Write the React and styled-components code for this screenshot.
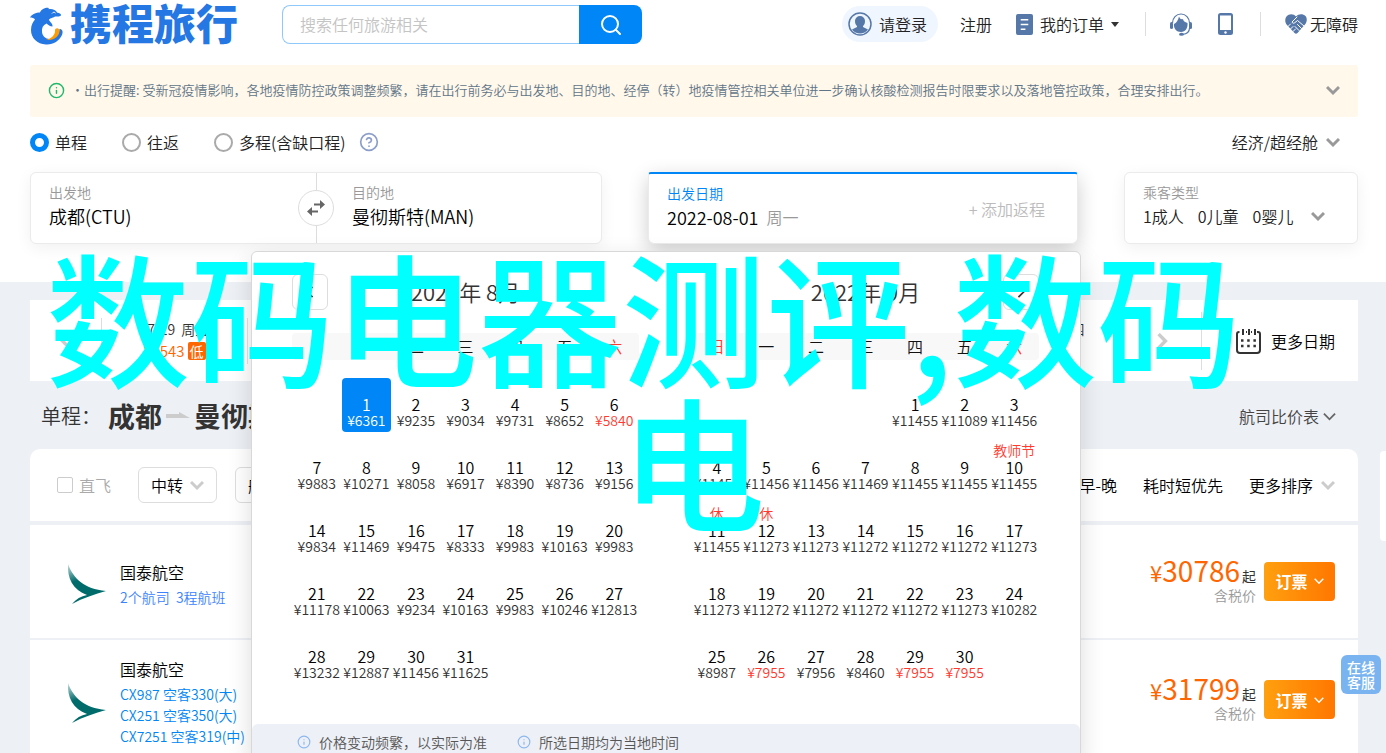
import styled, { createGlobalStyle } from "styled-components";
import { Search, Info, CircleHelp } from "lucide-react";

const GlobalStyle = createGlobalStyle`
  * {
    box-sizing: border-box;
  }

  body {
    margin: 0;
    overflow-x: hidden;
    background: #edf0f5;
    color: #000;
    font: 350 16px/24px "Noto Sans CJK SC", "Noto Sans", sans-serif;
  }

  button, input {
    font: inherit;
    color: inherit;
  }

  button {
    padding: 0;
    border: 0;
    background: none;
    cursor: pointer;
  }

  a {
    color: inherit;
    text-decoration: none;
  }
`;

const Page = styled.div`
  position: relative;
  min-height: 100vh;
  overflow: hidden;
`;

const Top = styled.div`
  padding: 0 28px 38px 30px;
  background: #fff;
`;

/* header */

const Header = styled.header`
  display: flex;
  align-items: center;
  height: 49px;
`;

const Logo = styled.a`
  display: flex;
  align-items: center;
  gap: 6px;
  width: 252px;
  padding-top: 2px;
  color: #2577e3;
  font-family: "Liberation Sans", "Noto Sans CJK SC", sans-serif;
  font-size: 42px;
  font-weight: 900;
  line-height: 48px;
`;

const SearchForm = styled.form`
  display: flex;
  width: 360px;
  height: 39px;
`;

const SearchInput = styled.input`
  flex: 1;
  min-width: 0;
  padding: 0 17px 2px;
  border: 1px solid #8fc8fa;
  border-right: 0;
  border-radius: 8px 0 0 8px;
  outline: 0;

  &::placeholder {
    color: #c4c4c4;
  }
`;

const SearchButton = styled.button`
  display: flex;
  align-items: center;
  justify-content: center;
  width: 63px;
  border-radius: 0 8px 8px 0;
  background: #0086f6;
  color: #fff;
`;

const HeaderNav = styled.nav`
  display: flex;
  align-items: center;
  margin-left: auto;
  padding-bottom: 1px;
  color: #222;
`;

const Login = styled.a`
  display: flex;
  align-items: center;
  gap: 7px;
  height: 36px;
  margin-right: 22px;
  padding: 0 11px 0 6px;
  border-radius: 18px;
  background: #f0f6ff;
`;

const NavLink = styled.a`
  display: flex;
  align-items: center;
  gap: ${(p) => p.$gap || 0}px;
  margin-right: ${(p) => p.$after || 0}px;
`;

const Caret = styled.i`
  border: 4px solid transparent;
  border-top: 5px solid #333;
  border-bottom: 0;
`;

const NavDivider = styled.span`
  width: 1px;
  height: 24px;
  margin-right: 24px;
  background: #ddd;
`;

/* notice and trip type */

const Notice = styled.div`
  display: flex;
  align-items: center;
  gap: 6px;
  height: 52px;
  margin-top: 16px;
  padding: 0 18px 2px;
  border-radius: 3px;
  background: #fff8eb;
  color: #5f7588;
  font-size: 13px;
  white-space: nowrap;
`;

const NoticeText = styled.p`
  flex: 1;
  margin: 0;
`;

const TripRow = styled.div`
  display: flex;
  align-items: center;
  height: 50px;
  margin-bottom: 5px;
  color: #222;
`;

const TripOption = styled.label`
  display: flex;
  align-items: center;
  gap: 6px;
  margin-right: 35px;
`;

const Radio = styled.input`
  appearance: none;
  width: 19px;
  height: 19px;
  margin: 0;
  border: 2px solid #aaa;
  border-radius: 50%;

  &:checked {
    border: 5px solid #0086f6;
  }
`;

const HelpButton = styled.button`
  display: flex;
  margin-left: -22px;
  color: #8b9dc9;
`;

const CabinButton = styled.button`
  display: flex;
  align-items: center;
  gap: 8px;
  margin-left: auto;
  padding-right: 18px;
`;

/* search fields */

const Fields = styled.div`
  position: relative;
  display: grid;
  grid-template-columns: 572fr 430fr 234fr;
  gap: 46px;
`;

const Card = styled.div`
  display: flex;
  min-width: 0;
  height: 72px;
  border: 1px solid #ebebeb;
  border-radius: 6px;
  background: #fff;
  box-shadow: 0 4px 16px rgba(0, 0, 0, 0.06);
`;

const DateCard = styled(Card)`
  justify-content: space-between;
  padding-right: 32px;
  border-top: 2px solid #0086f6;
  border-radius: 3px 3px 6px 6px;
  box-shadow: 0 6px 20px rgba(0, 0, 0, 0.2);
`;

const Field = styled.div`
  flex: 1;
  padding: 7px 0 0 18px;
`;

const FieldLabel = styled.div`
  color: ${(p) => (p.$active ? "#0086f6" : "#999")};
  font-size: 14px;
`;

const FieldValue = styled.div`
  display: flex;
  align-items: center;
  gap: ${(p) => (p.$small ? 14 : 8)}px;
  color: ${(p) => (p.$small ? "#222" : "#000")};
  font-size: ${(p) => (p.$small ? 16 : 18)}px;

  svg {
    margin-left: 4px;
  }
`;

const Weekday = styled.span`
  color: #999;
  font-size: 16px;
`;

const AddReturn = styled.button`
  color: #bbb;
`;

const SwapColumn = styled.div`
  display: flex;
  align-items: center;
  width: 36px;
  background: linear-gradient(#ddd, #ddd) center / 1px 100% no-repeat;
`;

const SwapButton = styled.button`
  display: flex;
  align-items: center;
  justify-content: center;
  width: 36px;
  height: 36px;
  border: 1px solid #ddd;
  border-radius: 50%;
  background: #fff;
`;

/* calendar popup */

const Popup = styled.div`
  position: absolute;
  z-index: 5;
  top: 79px;
  right: 277px;
  width: 830px;
  border: 1px solid #d8d8d8;
  border-radius: 6px;
  background: #fff;
  box-shadow: 0 8px 24px rgba(0, 0, 0, 0.14);
`;

const Months = styled.div`
  display: flex;
  gap: 53px;
  padding: 22px 41px 40px 40px;
`;

const Month = styled.section`
  flex: 1;
`;

const MonthHead = styled.div`
  display: grid;
  grid-template-columns: 36px 1fr 36px;
  align-items: center;
  height: 36px;
  margin-bottom: 23px;
`;

const MonthTitle = styled.h2`
  grid-column: 2;
  margin: 0;
  padding-bottom: 2px;
  color: #333;
  font-size: 22px;
  font-weight: 350;
  text-align: center;
`;

const MonthButton = styled.button`
  display: flex;
  align-items: center;
  justify-content: center;
  grid-column: ${(p) => (p.$next ? 3 : 1)};
  grid-row: 1;
  height: 36px;
  border: 1px solid #ddd;
  border-radius: 6px;
`;

const WeekRow = styled.div`
  display: grid;
  grid-template-columns: repeat(7, 1fr);
  height: 27px;
  margin-bottom: 18px;
  border-radius: 4px;
  background: #f8f8f8;
  line-height: 26px;
  text-align: center;
`;

const WeekName = styled.span`
  color: ${(p) => (p.$weekend ? "#ff3b30" : "#111")};
`;

const Days = styled.div`
  display: grid;
  grid-template-columns: repeat(7, 1fr);
  row-gap: 9px;
`;

const Day = styled.button`
  display: flex;
  flex-direction: column;
  align-items: center;
  grid-column: ${(p) => p.$column || "auto"};
  height: 54px;
  border-radius: 4px;
  background: ${(p) => (p.$selected ? "#0086f6" : "none")};
  color: ${(p) => (p.$selected ? "#fff" : "#000")};
  line-height: 18px;
`;

const Holiday = styled.span`
  height: 17px;
  color: #ff3b30;
  font-size: 14px;
  white-space: nowrap;
`;

const DayPrice = styled.span`
  color: ${(p) => (p.$selected ? "#fff" : p.$low ? "#ff3b30" : "#333")};
  font-size: 14px;
  line-height: 14px;
`;

const PopupFooter = styled.div`
  display: flex;
  gap: 30px;
  height: 40px;
  padding: 0 45px;
  border-radius: 6px;
  background: #edf0f6;
  color: #555;
  font-size: 14px;
  line-height: 36px;
`;

const Tip = styled.span`
  display: flex;
  align-items: center;
  gap: 8px;
  height: 36px;

  svg {
    color: #8cb8ee;
  }
`;

/* results */

const Results = styled.main`
  padding: 18px 28px 0 30px;
`;

const DateStrip = styled.div`
  display: flex;
  align-items: center;
  height: 81px;
  background: #fff;
`;

const StripArrow = styled.button`
  display: flex;
  align-items: center;
  justify-content: center;
  width: ${(p) => p.$width}px;
  height: 58px;
`;

const StripDates = styled.div`
  display: flex;
  flex: 1;
  border-left: 1px solid #ddd;
`;

const StripDate = styled.button`
  flex: 1;
  height: 46px;
  padding-bottom: 4px;
  border-right: 1px solid #e2e2e2;
  color: #333;
  font-size: 14px;
  line-height: 22px;
  white-space: pre;
`;

const StripPrice = styled.span`
  display: flex;
  align-items: center;
  justify-content: center;
  gap: 3px;
  color: #ff6600;
  font-size: 15px;
`;

const LowTag = styled.b`
  padding: 0 2px;
  border-radius: 2px;
  background: #ff6600;
  color: #fff;
  font-size: 14px;
  font-weight: 400;
  line-height: 18px;
`;

const MoreDates = styled.button`
  display: flex;
  align-items: center;
  gap: 10px;
  width: 157px;
  height: 58px;
  padding-left: 34px;
  border-left: 1px solid #ddd;
`;

const RouteRow = styled.div`
  display: flex;
  align-items: center;
  height: 68px;
  padding: 2px 22px 0 11px;
`;

const RouteType = styled.span`
  width: 67px;
  color: #333;
  font-size: 20px;
`;

const RouteTitle = styled.h1`
  display: flex;
  align-items: center;
  gap: 4px;
  margin: 0;
  color: #333;
  font-size: 27px;
`;

const CompareButton = styled.button`
  display: flex;
  align-items: center;
  gap: 4px;
  margin-left: auto;
  color: #444;
`;

const FilterBar = styled.div`
  display: flex;
  align-items: center;
  gap: 18px;
  height: 72px;
  margin-bottom: 4px;
  padding: 0 23px 1px 27px;
  border-radius: 10px 10px 0 0;
  background: #fff;
`;

const DirectLabel = styled.label`
  display: flex;
  align-items: center;
  gap: 6px;
  width: 63px;
  color: #aaa;
  white-space: nowrap;
`;

const Checkbox = styled.input`
  appearance: none;
  width: 16px;
  height: 16px;
  margin: 0;
  border: 1px solid #ccc;
  border-radius: 2px;
`;

const FilterButton = styled.button`
  display: flex;
  align-items: center;
  gap: 7px;
  height: 36px;
  padding: 0 12px;
  border: 1px solid #ddd;
  border-radius: 6px;
`;

const Sorts = styled.div`
  display: flex;
  gap: 26px;
  margin-left: auto;
`;

const SortButton = styled.button`
  display: flex;
  align-items: center;
  gap: 8px;
`;

const Flight = styled.article`
  display: flex;
  align-items: center;
  min-height: 113px;
  margin-bottom: 2px;
  padding: 18px 23px 13px 37px;
  background: #fff;
`;

const Airline = styled.div`
  margin-left: 13px;
`;

const AirlineName = styled.div`
  margin-bottom: 4px;
  line-height: 22px;
`;

const Plane = styled.div`
  color: ${(p) => (p.$soft ? "#3b82ff" : "#0086f6")};
  font-size: 14px;
  line-height: 21px;
  white-space: pre;
`;

const Booking = styled.div`
  display: flex;
  align-items: center;
  gap: 8px;
  margin-left: auto;
  padding-bottom: 6px;
`;

const PriceBox = styled.div`
  padding-bottom: 3px;
  text-align: right;
`;

const Price = styled.div`
  color: #ff6600;
  font-size: 28px;
  font-weight: 400;
  line-height: 30px;

  small {
    font-size: 22px;
    line-height: 1;
  }

  span {
    margin-left: 2px;
    color: #333;
    font-size: 14px;
    line-height: 1;
  }
`;

const Tax = styled.div`
  color: #999;
  font-size: 14px;
  line-height: 20px;
`;

const BookButton = styled.button`
  display: flex;
  align-items: center;
  justify-content: center;
  gap: 6px;
  width: 71px;
  height: 39px;
  border-radius: 4px;
  background: linear-gradient(90deg, #ffa00f, #ff7700);
  color: #fff;
  font-weight: 700;
`;

/* floating parts */

const SidePanel = styled.aside`
  position: absolute;
  top: 451px;
  right: 0;
  width: 6px;
  height: 90px;
  border-radius: 4px 0 0 4px;
  background: #fff;
`;

const ServiceButton = styled.button`
  position: fixed;
  top: 655px;
  right: 5px;
  width: 40px;
  height: 39px;
  padding: 0 5px;
  border-radius: 6px;
  background: #7ab4f0;
  color: #fff;
  font-size: 14px;
  font-weight: 500;
  line-height: 15px;
`;

const Headline = styled.div`
  position: absolute;
  z-index: 10;
  top: 242px;
  left: 0;
  width: 100%;
  padding-left: 46px;
  color: #0ff;
  font-size: 144px;
  font-weight: 500;
  line-height: 144px;
  white-space: nowrap;
  pointer-events: none;
`;

const HeadlineEnd = styled.div`
  margin-left: -46px;
  text-align: center;
`;

const turns = { down: 0, left: 90, right: 270 };

function Chevron({ color = "#999", to = "down", size = 14, weight = 3 }) {
  return (
    <svg width={size} height={size} viewBox="0 0 14 14" fill="none" stroke={color} strokeWidth={weight}>
      <path d="M1 4l6 6 6-6" transform={`rotate(${turns[to]} 7 7)`} />
    </svg>
  );
}

function Dolphin() {
  return (
    <svg width="34" height="38" viewBox="0 0 34 38">
      <path
        fill="#2577e3"
        d="M0 10.500C2 7 6 5.500 10 5.500C11 2.500 15 .5 18 .7C19 .8 19 1.500 18.500 2.200C22 1.500 26 3 27 5.500C29 6 31.500 7 31 8.300C30 10 27 9.500 25 9.500C22 11.500 19.500 11 19 13C20 15 23 17 22.500 19.500C20 19.500 18 18 16.500 16.500C13 18 11.500 21 12 25C12.500 30 17 33 22 31.500C26 30 29 27.500 29.500 22C32 22 33.500 24 32 28C29 34 23 38 16 37.500C7 37 1 31 1 23C1 18 3 15 5 12.500C4 11 2 10.500 0 10.500Z"
      />
      <path fill="#ff9c00" d="M25 23.500C25 20 30 20.500 29.500 24.500C29 30 22 34.500 16 32.500C20.500 32.500 25.500 28 25 23.500Z" />
      <path d="M22 6.500c1-1.500 2.500-1.500 3.500-.5" fill="none" stroke="#fff" />
    </svg>
  );
}

function UserIcon() {
  return (
    <svg width="24" height="24" viewBox="0 0 24 24">
      <circle cx="12" cy="12" r="11" fill="#f0f6ff" stroke="#5678a8" strokeWidth="1.5" />
      <path fill="#5678a8" d="M12 4a5 5 0 0 1 5 5c0 3-1 4-2 5v1l5 2.500A10 10 0 0 1 4 17.500L9 15v-1c-1-1-2-2-2-5a5 5 0 0 1 5-5z" />
    </svg>
  );
}

function OrderIcon() {
  return (
    <svg width="17" height="21" viewBox="0 0 18 22">
      <rect width="18" height="22" rx="2" fill="#5678a8" />
      <path d="M5 6h8M5 11h8M5 16h5" stroke="#fff" strokeWidth="1.500" />
    </svg>
  );
}

function HeadsetIcon() {
  return (
    <svg width="22" height="23" viewBox="0 0 22 23">
      <path d="M2.500 10a8.500 9 0 0 1 17 0" fill="none" stroke="#5678a8" strokeWidth="1.200" />
      <path d="M9 3.500c1 3 3 3 4 2.500 0 2 2 3 4.500 4 .5 5-2 9-6.500 9S3.500 15.500 4 11c3-1.500 4-4 5-7.500z" fill="#5678a8" />
      <rect x="0" y="9" width="3" height="7" rx="1.500" fill="#5678a8" />
      <rect x="19" y="9" width="3" height="7" rx="1.500" fill="#5678a8" />
      <path d="M19.500 15c0 4-3 6-7 6.500" fill="none" stroke="#5678a8" strokeWidth="1.200" />
      <ellipse cx="11.500" cy="21.300" rx="2.500" ry="1.500" fill="#5678a8" />
    </svg>
  );
}

function PhoneIcon() {
  return (
    <svg width="15" height="22" viewBox="0 0 15 22">
      <rect width="15" height="22" rx="2.500" fill="#5678a8" />
      <rect x="2" y="2.500" width="11" height="14.500" fill="#fff" />
      <circle cx="7.500" cy="19.500" r="1.200" fill="#fff" />
    </svg>
  );
}

function HandshakeHeart() {
  return (
    <svg width="22" height="20" viewBox="0 0 22 20">
      <path d="M11 2.500C13.500-.5 18-.5 20.500 2C22.500 4.500 22 8 20 10.500L12.500 19C11.500 20 10.500 20 9.500 19L2 11C-.5 8 0 4.500 1.500 2.500C4-.5 8.500-.5 11 2.500Z" fill="#5678a8" />
      <g fill="none" stroke="#fff" strokeLinecap="round" strokeLinejoin="round">
        <path d="M12 3L7 8C7.500 9.500 9 9.500 10 8.500L12.500 6.500L19 12" />
        <path d="M12.500 10.500l4 4M10 12.500l4 4M3 12.500l2.500-2.500M5.500 15l2.500-2.500M8 17.500l2.500-2.500" />
      </g>
    </svg>
  );
}

function SwapIcon() {
  return (
    <svg width="20" height="16" viewBox="0 0 20 16" fill="#666">
      <path d="M8 3.500h6V0l5 4.500L14 9V5.500H8z" />
      <path d="M12 10.500H6V7l-5 4.500L6 16v-3.500h6z" />
    </svg>
  );
}

function CalendarIcon() {
  return (
    <svg width="25" height="26" viewBox="0 0 25 26" fill="none" stroke="#333" strokeWidth="2">
      <path d="M3.500 4H3a2 2 0 0 0-2 2v16a3 3 0 0 0 3 3h17a3 3 0 0 0 3-3V6a2 2 0 0 0-2-2h-1M10 4h1M15 4h1M7 1v6M13 1v6M19 1v6" />
      <path d="M5 12.500h15M5 18h15" strokeWidth="2.500" strokeDasharray="2.500 3.700" />
    </svg>
  );
}

function AirlineLogo({ id }) {
  return (
    <svg width="40" height="40" viewBox="0 0 40 40">
      <linearGradient id={id} x1="0" y1="0" x2="0.300" y2="1">
        <stop offset="0" stopColor="#006b6b" stopOpacity="0.200" />
        <stop offset="0.450" stopColor="#006b6b" />
      </linearGradient>
      <path fill={`url(#${id})`} d="M1 0C6 14 17 25 39 27C28 30 16 34 5 40C9 35 14 32 20 31C6 26 0 14 1 0Z" />
    </svg>
  );
}

const weekNames = ["日", "一", "二", "三", "四", "五", "六"];

const august = {
  title: "2022年 8月",
  firstColumn: 2,
  selected: 1,
  low: [6],
  holidays: {},
  prices: [
    6361, 9235, 9034, 9731, 8652, 5840,
    9883, 10271, 8058, 6917, 8390, 8736, 9156,
    9834, 11469, 9475, 8333, 9983, 10163, 9983,
    11178, 10063, 9234, 10163, 9983, 10246, 12813,
    13232, 12887, 11456, 11625,
  ],
};

const september = {
  title: "2022年 9月",
  firstColumn: 5,
  low: [26, 29, 30],
  holidays: { 10: "教师节", 11: "休", 12: "休" },
  prices: [
    11455, 11089, 11456,
    11456, 11456, 11456, 11469, 11455, 11455, 11455,
    11455, 11273, 11273, 11272, 11272, 11272, 11273,
    11273, 11272, 11272, 11272, 11272, 11273, 10282,
    8987, 7955, 7956, 8460, 7955, 7955,
  ],
};

const stripDates = [
  { date: "07-29  周五", price: 6543, low: true },
  { date: "07-30  周六", price: 7210 },
  { date: "07-31  周日", price: 6980 },
  { date: "08-01  周一", price: 6361 },
  { date: "08-02  周二", price: 9235 },
  { date: "08-03  周三", price: 9034 },
  { date: "08-04  周四", price: 9731 },
];

const flights = [
  { id: "cx1", soft: true, planes: ["2个航司  3程航班"], price: 30786 },
  { id: "cx2", planes: ["CX987 空客330(大)", "CX251 空客350(大)", "CX7251 空客319(中)"], price: 31799 },
];

function CalendarMonth({ month, next }) {
  return (
    <Month>
      <MonthHead>
        <MonthTitle>{month.title}</MonthTitle>
        <MonthButton $next={next} aria-label={next ? "下个月" : "上个月"}>
          <Chevron to={next ? "right" : "left"} color="#333" size={12} weight={2} />
        </MonthButton>
      </MonthHead>
      <WeekRow>
        {weekNames.map((name, i) => (
          <WeekName key={name} $weekend={i === 0 || i === 6}>{name}</WeekName>
        ))}
      </WeekRow>
      <Days>
        {month.prices.map((price, i) => {
          const day = i + 1;
          const selected = day === month.selected;
          return (
            <Day key={day} $column={i === 0 ? month.firstColumn : null} $selected={selected}>
              <Holiday>{month.holidays[day]}</Holiday>
              {day}
              <DayPrice $selected={selected} $low={month.low.includes(day)}>¥{price}</DayPrice>
            </Day>
          );
        })}
      </Days>
    </Month>
  );
}

function Calendar() {
  return (
    <Popup>
      <Months>
        <CalendarMonth month={august} />
        <CalendarMonth month={september} next />
      </Months>
      <PopupFooter>
        <Tip><Info size={14} strokeWidth={2} />价格变动频繁，以实际为准</Tip>
        <Tip><Info size={14} strokeWidth={2} />所选日期均为当地时间</Tip>
      </PopupFooter>
    </Popup>
  );
}

function SiteHeader() {
  return (
    <Header>
      <Logo href="#"><Dolphin />携程旅行</Logo>
      <SearchForm>
        <SearchInput aria-label="搜索" placeholder="搜索任何旅游相关" />
        <SearchButton type="button" aria-label="搜索"><Search size={24} strokeWidth={2} /></SearchButton>
      </SearchForm>
      <HeaderNav>
        <Login href="#"><UserIcon />请登录</Login>
        <NavLink href="#" $after={24}>注册</NavLink>
        <NavLink href="#" $gap={7} $after={26}><OrderIcon />我的订单<Caret /></NavLink>
        <NavDivider />
        <NavLink href="#" $after={26} aria-label="客服"><HeadsetIcon /></NavLink>
        <NavLink href="#" $after={27} aria-label="手机版"><PhoneIcon /></NavLink>
        <NavDivider />
        <NavLink href="#" $gap={3}><HandshakeHeart />无障碍</NavLink>
      </HeaderNav>
    </Header>
  );
}

function SearchFields() {
  return (
    <Fields>
      <Card>
        <Field>
          <FieldLabel>出发地</FieldLabel>
          <FieldValue>成都(CTU)</FieldValue>
        </Field>
        <SwapColumn>
          <SwapButton aria-label="交换"><SwapIcon /></SwapButton>
        </SwapColumn>
        <Field>
          <FieldLabel>目的地</FieldLabel>
          <FieldValue>曼彻斯特(MAN)</FieldValue>
        </Field>
      </Card>
      <DateCard>
        <Field>
          <FieldLabel $active>出发日期</FieldLabel>
          <FieldValue>2022-08-01 <Weekday>周一</Weekday></FieldValue>
        </Field>
        <AddReturn>+ 添加返程</AddReturn>
      </DateCard>
      <Card>
        <Field>
          <FieldLabel>乘客类型</FieldLabel>
          <FieldValue $small>
            <span>1成人</span>
            <span>0儿童</span>
            <span>0婴儿</span>
            <Chevron />
          </FieldValue>
        </Field>
      </Card>
      <Calendar />
    </Fields>
  );
}

function App() {
  return (
    <Page>
      <GlobalStyle />
      <Top>
        <SiteHeader />
        <Notice>
          <Info size={17} color="#1fb96b" strokeWidth={2} />
          <NoticeText>
            ·出行提醒: 受新冠疫情影响，各地疫情防控政策调整频繁，请在出行前务必与出发地、目的地、经停（转）地疫情管控相关单位进一步确认核酸检测报告时限要求以及落地管控政策，合理安排出行。
          </NoticeText>
          <Chevron />
        </Notice>
        <TripRow>
          <TripOption><Radio type="radio" name="trip" defaultChecked />单程</TripOption>
          <TripOption><Radio type="radio" name="trip" />往返</TripOption>
          <TripOption><Radio type="radio" name="trip" />多程(含缺口程)</TripOption>
          <HelpButton aria-label="帮助"><CircleHelp size={20} /></HelpButton>
          <CabinButton>经济/超经舱<Chevron /></CabinButton>
        </TripRow>
        <SearchFields />
      </Top>

      <Results>
        <DateStrip>
          <StripArrow $width={71} aria-label="前一天"><Chevron to="left" color="#ccc" size={16} /></StripArrow>
          <StripDates>
            {stripDates.map((item) => (
              <StripDate key={item.date}>
                {item.date}
                <StripPrice>¥{item.price}{item.low && <LowTag>低</LowTag>}</StripPrice>
              </StripDate>
            ))}
          </StripDates>
          <StripArrow $width={78} aria-label="后一天"><Chevron to="right" color="#ccc" size={16} /></StripArrow>
          <MoreDates><CalendarIcon />更多日期</MoreDates>
        </DateStrip>

        <RouteRow>
          <RouteType>单程：</RouteType>
          <RouteTitle>
            成都
            <svg width="24" height="8" viewBox="0 0 24 8"><path d="M0 2h13V0l11 6H0z" fill="#ccc" /></svg>
            曼彻斯特
          </RouteTitle>
          <CompareButton>航司比价表<Chevron color="#666" size={13} weight={2} /></CompareButton>
        </RouteRow>

        <FilterBar>
          <DirectLabel><Checkbox type="checkbox" />直飞</DirectLabel>
          <FilterButton>中转<Chevron color="#ccc" /></FilterButton>
          <FilterButton>航司<Chevron color="#ccc" /></FilterButton>
          <Sorts>
            <SortButton>起飞早-晚</SortButton>
            <SortButton>耗时短优先</SortButton>
            <SortButton>更多排序<Chevron color="#ccc" /></SortButton>
          </Sorts>
        </FilterBar>

        {flights.map((flight) => (
          <Flight key={flight.id}>
            <AirlineLogo id={flight.id} />
            <Airline>
              <AirlineName>国泰航空</AirlineName>
              {flight.planes.map((plane) => (
                <Plane key={plane} $soft={flight.soft}>{plane}</Plane>
              ))}
            </Airline>
            <Booking>
              <PriceBox>
                <Price><small>¥</small>{flight.price}<span>起</span></Price>
                <Tax>含税价</Tax>
              </PriceBox>
              <BookButton>订票<Chevron color="#fff" size={10} weight={2} /></BookButton>
            </Booking>
          </Flight>
        ))}
      </Results>

      <SidePanel />
      <ServiceButton>在线客服</ServiceButton>
      <Headline>
        数码电器测评,数码
        <HeadlineEnd>电</HeadlineEnd>
      </Headline>
    </Page>
  );
}

export default App;
